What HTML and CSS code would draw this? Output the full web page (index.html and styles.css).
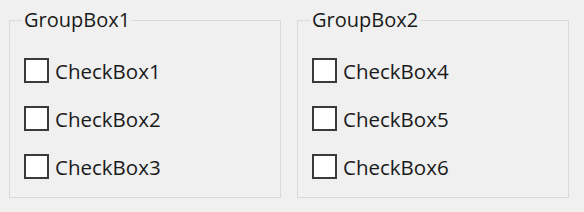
FILE: index.html
```html
<!DOCTYPE html>
<html lang="en">
<head>
    <meta charset="UTF-8">
    <meta name="viewport" content="width=device-width, initial-scale=1.0">
    <title>GroupBox</title>
    <link rel="stylesheet" href="styles.css">
</head>
<body>
<div class="form">
    <fieldset class="group">
        <legend>GroupBox1</legend>
        <label class="check"><input type="checkbox"><span>CheckBox1</span></label>
        <label class="check"><input type="checkbox"><span>CheckBox2</span></label>
        <label class="check"><input type="checkbox"><span>CheckBox3</span></label>
    </fieldset>
    <fieldset class="group">
        <legend>GroupBox2</legend>
        <label class="check"><input type="checkbox"><span>CheckBox4</span></label>
        <label class="check"><input type="checkbox"><span>CheckBox5</span></label>
        <label class="check"><input type="checkbox"><span>CheckBox6</span></label>
    </fieldset>
</div>
</body>
</html>
```

FILE: styles.css
```css
body {
    margin: 0;
    background-color: #f0f0f0;
    font-family: 'Open Sans', 'Noto Sans', sans-serif;
    color: #1a1a1a;
}

.form {
    display: flex;
    gap: 16px;
    padding: 9px 0 0 9px;
}

.group {
    box-sizing: border-box;
    width: 272px;
    height: 189px;
    margin: 0;
    padding: 0 14px 17px 14px;
    border: 1px solid #d9d9d9;
    display: flex;
    flex-direction: column;
    gap: 23px;
}

.group legend {
    font-size: 20px;
    line-height: 22px;
    padding: 0 2px;
    margin-left: -2px;
    margin-bottom: 27px;
}

.check {
    display: flex;
    align-items: center;
    gap: 6px;
    height: 25px;
    font-size: 20.5px;
    line-height: 25px;
}

.check input {
    appearance: none;
    box-sizing: border-box;
    width: 25px;
    height: 25px;
    margin: 0;
    background-color: #fff;
    border: 2px solid #3a3a3a;
}

.check span {
    padding-top: 2px;
}
```
